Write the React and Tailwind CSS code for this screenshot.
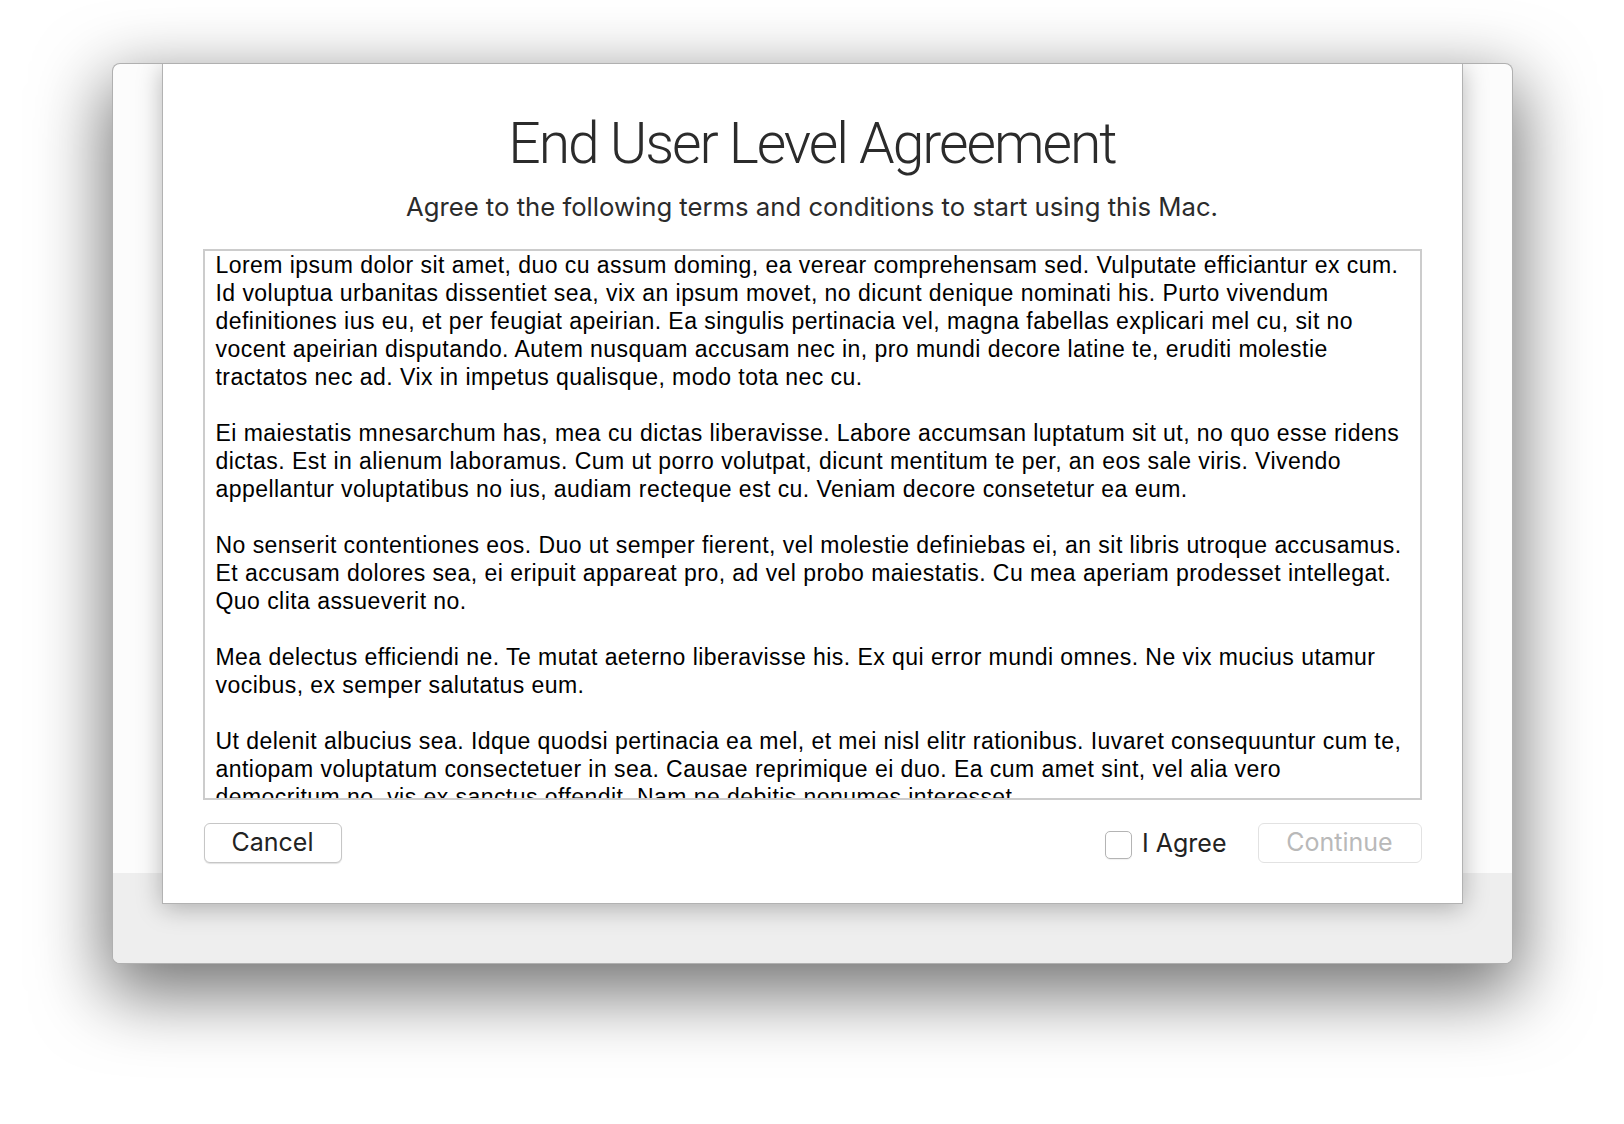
const paragraphs = [
  [
    'Lorem ipsum dolor sit amet, duo cu assum doming, ea verear comprehensam sed. Vulputate efficiantur ex cum.',
    'Id voluptua urbanitas dissentiet sea, vix an ipsum movet, no dicunt denique nominati his. Purto vivendum',
    'definitiones ius eu, et per feugiat apeirian. Ea singulis pertinacia vel, magna fabellas explicari mel cu, sit no',
    'vocent apeirian disputando. Autem nusquam accusam nec in, pro mundi decore latine te, eruditi molestie',
    'tractatos nec ad. Vix in impetus qualisque, modo tota nec cu.',
  ],
  [
    'Ei maiestatis mnesarchum has, mea cu dictas liberavisse. Labore accumsan luptatum sit ut, no quo esse ridens',
    'dictas. Est in alienum laboramus. Cum ut porro volutpat, dicunt mentitum te per, an eos sale viris. Vivendo',
    'appellantur voluptatibus no ius, audiam recteque est cu. Veniam decore consetetur ea eum.',
  ],
  [
    'No senserit contentiones eos. Duo ut semper fierent, vel molestie definiebas ei, an sit libris utroque accusamus.',
    'Et accusam dolores sea, ei eripuit appareat pro, ad vel probo maiestatis. Cu mea aperiam prodesset intellegat.',
    'Quo clita assueverit no.',
  ],
  [
    'Mea delectus efficiendi ne. Te mutat aeterno liberavisse his. Ex qui error mundi omnes. Ne vix mucius utamur',
    'vocibus, ex semper salutatus eum.',
  ],
  [
    'Ut delenit albucius sea. Idque quodsi pertinacia ea mel, et mei nisl elitr rationibus. Iuvaret consequuntur cum te,',
    'antiopam voluptatum consectetuer in sea. Causae reprimique ei duo. Ea cum amet sint, vel alia vero',
    'democritum no, vis ex sanctus offendit. Nam ne debitis nonumes interesset.',
  ],
];

function AgreementText() {
  return (
    <div className="h-[551px] overflow-hidden border-2 border-[#cccccc] bg-white pl-[11px] font-['Liberation_Sans',Arial,sans-serif] text-[23px] leading-[28px] tracking-[0.45px] text-black">
      {paragraphs.map((lines, index) => (
        <p key={index} className="mb-[28px]">
          {lines.map((line) => (
            <span key={line} className="block whitespace-nowrap">
              {line}
            </span>
          ))}
        </p>
      ))}
    </div>
  );
}

function App() {
  return (
    <div className="min-h-screen bg-white pt-[63px] font-['Inter','Liberation_Sans',sans-serif]">
      <div className="relative mx-auto flex h-[901px] w-[1401px] flex-col overflow-hidden rounded-[8px] border border-black/30 bg-[#fcfcfc] shadow-[0_24px_70px_6px_rgba(0,0,0,0.55)]">
        <div className="h-[809px]" />
        <div className="flex-1 bg-[#eeeeee]" />

        <section className="absolute left-[49px] top-0 flex h-[840px] w-[1301px] flex-col border-x border-b border-black/30 bg-white px-[40px] shadow-[0_4px_24px_rgba(0,0,0,0.28)]">
          <h1 className="mt-[51px] text-center font-['Roboto','Inter',sans-serif] text-[57px] font-light leading-[57px] tracking-[-0.035em] text-[#2b2b2b]">
            End User Level Agreement
          </h1>
          <p className="mt-[19px] text-center text-[25.7px] leading-[32px] text-[#2b2b2b]">
            Agree to the following terms and conditions to start using this Mac.
          </p>

          <div className="mt-[26px]">
            <AgreementText />
          </div>

          <div className="mt-[23px] flex items-center justify-between">
            <button
              type="button"
              className="ml-px h-[40px] w-[138px] rounded-[6px] border border-[#c6c6c6] bg-white text-[25px] text-[#222222] shadow-[0_1px_1px_rgba(0,0,0,0.12)]"
            >
              Cancel
            </button>
            <div className="flex items-center">
              <label className="flex items-center gap-[10px] text-[25px] text-[#222222]">
                <span className="mt-[4px] h-[28px] w-[27px] rounded-[5px] border border-[#b4b4b4] bg-white shadow-[0_1px_1px_rgba(0,0,0,0.06)]" />
                <span className="mt-[2px]">I Agree</span>
              </label>
              <button
                type="button"
                disabled
                className="ml-[31px] h-[40px] w-[164px] rounded-[6px] border border-[#e2e2e2] bg-white text-[25px] text-[#b9b9b9]"
              >
                Continue
              </button>
            </div>
          </div>
        </section>
      </div>
    </div>
  );
}

export default App;
